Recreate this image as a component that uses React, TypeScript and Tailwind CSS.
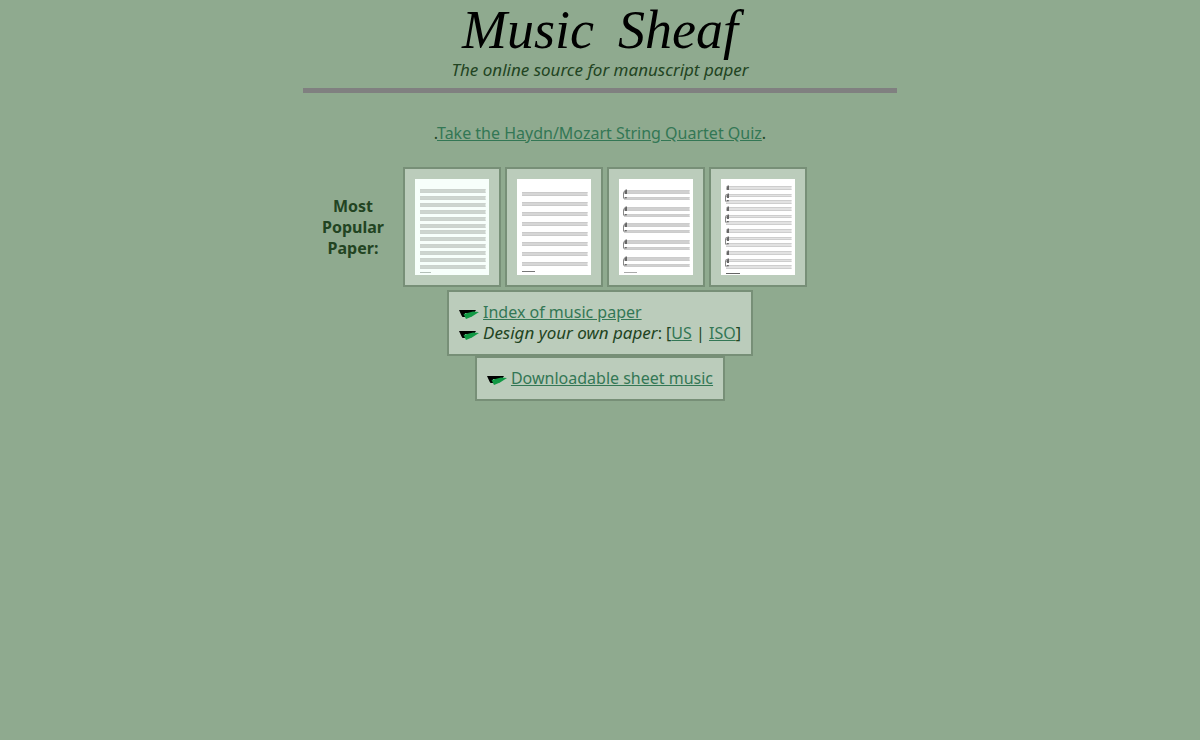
import type { ReactNode } from 'react';

interface Paper {
  id: string;
  title: string;
  paperClass: string;
  staves: { y: number; height: number }[];
  systems: { top: number; bottom: number }[];
  clefs: number[];
  footer: { width: number; y: number; color: string };
  fill: string;
  edge: string;
}

const evenly = (count: number, start: number, step: number, height: number) =>
  Array.from({ length: count }, (_, i) => ({
    y: Math.round(start + i * step),
    height,
  }));

const grandStaff = [11, 28, 44, 61, 78];
const soloPiano = [7, 28, 50, 72];

const papers: Paper[] = [
  {
    id: 'twelve-stave',
    title: 'Twelve stave paper',
    paperClass: 'bg-[#f7fffb]',
    staves: evenly(12, 10, 6.9, 4),
    systems: [],
    clefs: [],
    footer: { width: 11, y: 93, color: '#b3c0b8' },
    fill: '#cdd5cf',
    edge: '#cbd2cd',
  },
  {
    id: 'eight-stave',
    title: 'Eight stave paper',
    paperClass: 'bg-white',
    staves: evenly(8, 13, 10, 4),
    systems: [],
    clefs: [],
    footer: { width: 13, y: 92, color: '#777777' },
    fill: '#d6d6d6',
    edge: '#cacaca',
  },
  {
    id: 'piano',
    title: 'Piano paper',
    paperClass: 'bg-white',
    staves: grandStaff.flatMap((y) => [{ y, height: 4 }, { y: y + 7, height: 3 }]),
    systems: grandStaff.map((y) => ({ top: y + 2, bottom: y + 9 })),
    clefs: grandStaff,
    footer: { width: 13, y: 93, color: '#aaaaaa' },
    fill: '#d0d0d0',
    edge: '#cccccc',
  },
  {
    id: 'solo-piano',
    title: 'Solo and piano paper',
    paperClass: 'bg-white',
    staves: soloPiano.flatMap((y) => [
      { y, height: 4 },
      { y: y + 8, height: 3 },
      { y: y + 14, height: 4 },
    ]),
    systems: soloPiano.map((y) => ({ top: y + 9, bottom: y + 16 })),
    clefs: soloPiano.flatMap((y) => [y, y + 8]),
    footer: { width: 14, y: 94, color: '#666666' },
    fill: '#e2e2e2',
    edge: '#cecece',
  },
];

function PaperThumb({ paper }: { paper: Paper }) {
  return (
    <svg
      role="img"
      aria-label={paper.title}
      viewBox="0 0 74 96"
      className={`block h-24 w-[74px] ${paper.paperClass}`}
    >
      {paper.staves.map(({ y, height }) => (
        <g key={y}>
          <rect x="5" y={y} width="65.5" height={height} fill={paper.fill} />
          <rect x="5" y={y} width="65.5" height="1" fill={paper.edge} />
          <rect x="5" y={y + height - 1} width="65.5" height="1" fill={paper.edge} />
        </g>
      ))}
      {paper.clefs.map((y) => (
        <path key={y} d={`M7 ${y - 1}L8 ${y}V${y + 4}H6L5.5 ${y + 2}Z`} fill="#666666" />
      ))}
      {paper.systems.map(({ top, bottom }) => (
        <g key={top}>
          <path
            d={`M5.5 ${top - 1}L4.5 ${top + 1}V${bottom - 1}L5.5 ${bottom}`}
            stroke="#888888"
            fill="none"
          />
          <path d={`M5.5 ${bottom - 2}H8L7 ${bottom}Z`} fill="#666666" />
        </g>
      ))}
      <rect x="5" y={paper.footer.y} width={paper.footer.width} height="1" fill={paper.footer.color} />
    </svg>
  );
}

function Bullet() {
  return (
    <svg aria-hidden="true" viewBox="0 0 20 14" className="mr-1 h-[14px] w-5 shrink-0">
      <path d="M0 4H17L15 7H6V11H3.5L2.5 9.5Z" fill="#000000" />
      <path d="M4.5 8L14 5.5L20 6L13 10.5L7 13Z" fill="#119944" />
    </svg>
  );
}

function TextLink({ href, children }: { href: string; children: ReactNode }) {
  return (
    <a href={href} className="text-[#337755] underline hover:text-[#224422]">
      {children}
    </a>
  );
}

export default function App() {
  return (
    <div className="min-h-screen bg-[#8faa8f] px-[6px] font-['Noto_Sans','Open_Sans',sans-serif] text-[16px] leading-[21px] text-[#224422]">
      <header className="flex flex-col items-center">
        <h1 className="flex gap-6 font-['Liberation_Serif',serif] text-[54px] leading-[60px] text-black italic">
          <span>Music</span> <span>Sheaf</span>
        </h1>
        <p className="text-[17px] leading-5 italic">The online source for manuscript paper</p>
        <hr className="mt-2 h-[5px] w-1/2 border-0 bg-[#808080]" />
      </header>

      <main>
        <p className="mt-[30px] text-center">
          .<TextLink href="#quiz">Take the Haydn/Mozart String Quartet Quiz</TextLink>.
        </p>

        {/* Popular paper */}
        <section className="mx-auto mt-[23px] flex w-1/2 items-center">
          <h2 className="w-[100px] shrink-0 px-4 text-center font-bold">Most Popular Paper:</h2>
          <div className="flex shrink-0 gap-1">
            {papers.map((paper) => (
              <a
                key={paper.id}
                href={`#${paper.id}`}
                className="border-2 border-[#778f77] bg-[#bbccbb] p-[10px]"
              >
                <PaperThumb paper={paper} />
              </a>
            ))}
          </div>
        </section>

        {/* Site links */}
        <nav className="mt-[3px] flex flex-col items-center">
          <ul className="border-2 border-[#778f77] bg-[#bbccbb] p-[10px]">
            <li className="flex items-center">
              <Bullet />
              <TextLink href="#index">Index of music paper</TextLink>
            </li>
            <li className="flex items-center">
              <Bullet />
              <span>
                <em className="text-[17px] leading-none">Design your own paper</em>: [
                <TextLink href="#us">US</TextLink> | <TextLink href="#iso">ISO</TextLink>]
              </span>
            </li>
          </ul>
          <div className="flex items-center border-2 border-[#778f77] bg-[#bbccbb] p-[10px]">
            <Bullet />
            <TextLink href="#sheet-music">Downloadable sheet music</TextLink>
          </div>
        </nav>
      </main>
    </div>
  );
}
